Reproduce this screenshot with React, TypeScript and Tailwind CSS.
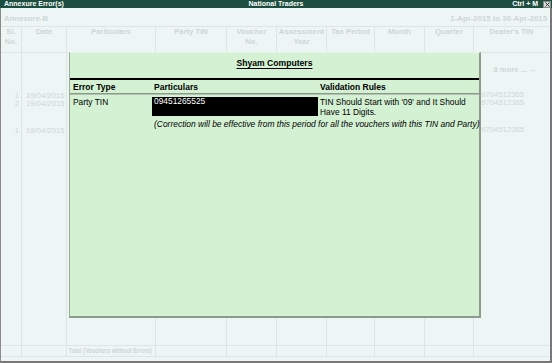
const headers = [
  'Sl.\nNo.',
  'Date',
  'Particulars',
  'Party TIN',
  'Voucher\nNo.',
  'Assessment\nYear',
  'Tax Period',
  'Month',
  'Quarter',
  "Dealer's TIN",
]

function SlColumn() {
  return (
    <div className="flex flex-col items-end pr-[2px] pt-[39px] leading-[8px]">
      <span>1</span>
      <span>2</span>
      <span className="mt-[19px]">1</span>
    </div>
  )
}

function DateColumn() {
  return (
    <div className="flex flex-col pl-[4px] pt-[39px] leading-[8px]">
      <span>19/04/2015</span>
      <span>19/04/2015</span>
      <span className="mt-[19px]">18/04/2015</span>
    </div>
  )
}

function DealerColumn() {
  return (
    <div className="flex flex-col pt-[13px] leading-[8px]">
      <span className="self-end pr-[12px] font-bold">8 more ... →</span>
      <div className="flex flex-col pl-[3px] pt-[17px] leading-[8px]">
        <span>09704512365</span>
        <span>09704512365</span>
        <span className="mt-[19px]">09704512365</span>
      </div>
    </div>
  )
}

function ErrorModal() {
  return (
    <div className="absolute left-[69px] top-[52px] flex h-[266px] w-[412px] flex-col border-t border-l border-r-2 border-b-2 border-t-[#e9f3e9] border-l-[#9aa79a] border-r-[#8e9a8e] border-b-[#8e9a8e] bg-[#d4f1d4] font-['Liberation_Sans',Arial,sans-serif] text-[8.4px] text-black">
      <div className="h-[25px] pt-[5px] text-center text-[8.6px] font-bold leading-[10px]">
        <span className="underline underline-offset-[2px]">Shyam Computers</span>
      </div>
      <div className="h-[2px] bg-black" />
      <div className="grid h-[13px] grid-cols-[82px_168px_1fr] items-center text-[8.5px] font-bold leading-[10px]">
        <span className="pl-[3px]">Error Type</span>
        <span className="pl-[2px]">Particulars</span>
        <span>Validation Rules</span>
      </div>
      <div className="h-[2px] border-t border-b border-t-[#8c988c] border-b-[#b3c3b3]" />
      <div className="grid grid-cols-[82px_168px_1fr] leading-[10px]">
        <span className="pl-[3px] pt-[2px]">Party TIN</span>
        <div className="pt-[2px]">
          <div className="h-[19px] w-[166px] bg-black pl-[2px] leading-[9px] text-white">09451265525</div>
        </div>
        <span className="pt-[2px]">
          TIN Should Start with '09' and It Should
          <br />
          Have 11 Digits.
        </span>
        <span className="col-span-2 col-start-2 whitespace-nowrap pl-[2px] pt-[2px] text-[8.45px] italic">
          (Correction will be effective from this period for all the vouchers with this TIN and Party)
        </span>
      </div>
    </div>
  )
}

export default function App() {
  return (
    <div className="relative flex h-[363px] w-[552px] flex-col overflow-hidden bg-[#eef6f5] font-['Liberation_Sans',Arial,sans-serif]">
      <div className="grid h-[8px] grid-cols-[1fr_auto_1fr] items-center bg-[#1d4e40] text-[7px] font-bold leading-[8px] text-white">
        <span className="pl-[4px]">Annexure Error(s)</span>
        <span>National Traders</span>
        <div className="flex items-center justify-end gap-[5px] pr-[1px]">
          <span>Ctrl + M</span>
          <div className="flex h-[7px] w-[8px] items-center justify-center border border-[#8a8a8a] bg-[#d8d8d8]">
            <svg width="5" height="5" viewBox="0 0 5 5">
              <path d="M0.5 0.5L4.5 4.5M4.5 0.5L0.5 4.5" stroke="#333" strokeWidth="1" />
            </svg>
          </div>
        </div>
      </div>
      <div className="flex flex-1 flex-col border-l border-r-2 border-b-2 border-l-[#8a8a8a] border-r-[#777777] border-b-[#777777] text-[#cdd6d6]">
        <div className="flex h-[18px] items-center justify-between px-[3px] pt-[3px] text-[7.8px] font-bold">
          <span>Annexure-B</span>
          <span>1-Apr-2015 to 30-Apr-2015</span>
        </div>
        <div className="grid flex-1 grid-cols-[21px_45px_89px_71px_50px_50px_48px_50px_49px_75px] grid-rows-[26px_1fr_12px] border-t border-[#dde5e5] text-[7.7px]">
          {headers.map((h, i) => (
            <div
              key={h}
              className={`whitespace-pre-line border-b border-[#dde5e5] text-center font-bold leading-[10px] ${i < 9 ? 'border-r' : ''}`}
            >
              {h}
            </div>
          ))}
          {headers.map((h, i) => (
            <div key={'b' + h} className={`border-[#dde5e5] ${i < 9 ? 'border-r' : ''}`}>
              {i === 0 && <SlColumn />}
              {i === 1 && <DateColumn />}
              {i === 9 && <DealerColumn />}
            </div>
          ))}
          {headers.map((h, i) => (
            <div
              key={'t' + h}
              className={`border-t border-b border-[#dde5e5] ${i < 9 ? 'border-r' : ''}`}
            >
              {i === 2 && (
                <span className="block origin-left scale-x-[0.78] whitespace-nowrap pl-[2px] text-[7.2px] font-bold leading-[10px]">
                  Total (Vouchers without Errors)
                </span>
              )}
            </div>
          ))}
        </div>
        <div className="h-[4px]" />
      </div>
      <ErrorModal />
    </div>
  )
}
